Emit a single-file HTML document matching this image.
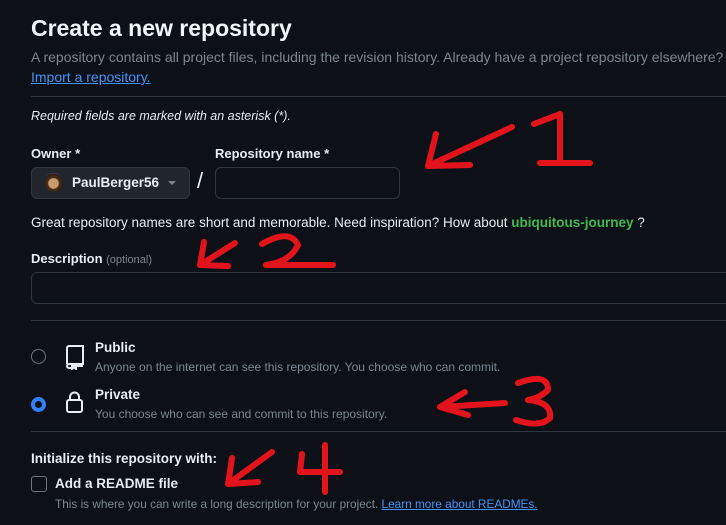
<!DOCTYPE html>
<html><head><style>
body{margin:0;width:726px;height:525px;background:#0d1117;overflow:hidden;font-family:"Liberation Sans",sans-serif;color:#e6edf3;position:relative}
.a{position:absolute;white-space:nowrap}
.g{color:#7d8590}
.hr{position:absolute;left:31px;right:0;height:1px;background:#30363d}
b{font-weight:bold}
</style></head><body>
<div class="a" style="left:31px;top:15px;font-size:23px;font-weight:bold;color:#f0f6fc">Create a new repository</div>
<div class="a g" style="left:31px;top:49px;font-size:14px">A repository contains all project files, including the revision history. Already have a project repository elsewhere?</div>
<div class="a" style="left:31px;top:69px;font-size:14px;color:#4493f8;text-decoration:underline">Import a repository.</div>
<div class="hr" style="top:96px"></div>
<div class="a" style="left:31px;top:109px;font-size:12.5px;font-style:italic">Required fields are marked with an asterisk (*).</div>
<div class="a" style="left:31px;top:146px;font-size:13px;font-weight:bold">Owner *</div>
<div class="a" style="left:215px;top:146px;font-size:13px;font-weight:bold">Repository name *</div>
<div class="a" style="left:31px;top:167px;width:157px;height:30px;border:1px solid #30363d;border-radius:6px;background:#21262d"></div>
<div class="a" style="left:44px;top:173px;width:19px;height:19px;border-radius:50%;background:radial-gradient(circle at 50% 55%,#c89a70 0 35%,#4a2e1c 40%,#2a1d14 70%,#6b3aa8 72%)"></div>
<div class="a" style="left:72px;top:175px;font-size:13.5px;font-weight:bold">PaulBerger56</div>
<div class="a" style="left:168px;top:181px;border:4px solid transparent;border-top:4px solid #7d8590"></div>
<div class="a" style="left:197px;top:168px;font-size:22px">/</div>
<div class="a" style="left:215px;top:167px;width:183px;height:30px;border:1px solid #30363d;border-radius:6px;background:#0d1117"></div>
<div class="a" style="left:31px;top:215px;font-size:13.5px">Great repository names are short and memorable. Need inspiration? How about <b style="color:#3fb950">ubiquitous-journey</b> ?</div>
<div class="a" style="left:31px;top:251px;font-size:13px;font-weight:bold">Description <span class="g" style="font-weight:normal;font-size:11px">(optional)</span></div>
<div class="a" style="left:31px;top:272px;width:720px;height:30px;border:1px solid #30363d;border-radius:6px"></div>
<div class="hr" style="top:320px"></div>
<div class="a" style="left:31px;top:349px;width:13px;height:13px;border:1px solid #6e7681;border-radius:50%"></div>
<svg class="a" style="left:64px;top:344px" width="22" height="26" viewBox="0 0 22 26" fill="none" stroke="#e6edf3" stroke-width="2"><path d="M3 20V4a2 2 0 0 1 2-2h14v18H5a2 2 0 0 0-2 2 2 2 0 0 0 2 2h2M13 22h6"/><path d="M8 20v5l2-1.5 2 1.5v-5" fill="#e6edf3"/></svg>
<div class="a" style="left:95px;top:340px;font-size:13.5px;font-weight:bold">Public</div>
<div class="a g" style="left:95px;top:360px;font-size:12px">Anyone on the internet can see this repository. You choose who can commit.</div>
<div class="a" style="left:31px;top:397px;width:7px;height:7px;border:4px solid #2f81f7;border-radius:50%;background:#0d1117"></div>
<svg class="a" style="left:65px;top:390px" width="20" height="24" viewBox="0 0 20 24" fill="none" stroke="#e6edf3" stroke-width="2"><rect x="2" y="10" width="15" height="12" rx="2"/><path d="M5 10V7a4.5 4.5 0 0 1 9 0v3"/></svg>
<div class="a" style="left:95px;top:387px;font-size:13.5px;font-weight:bold">Private</div>
<div class="a g" style="left:95px;top:407px;font-size:12px">You choose who can see and commit to this repository.</div>
<div class="hr" style="top:431px"></div>
<div class="a" style="left:31px;top:451px;font-size:13.5px;font-weight:bold">Initialize this repository with:</div>
<div class="a" style="left:31px;top:476px;width:14px;height:14px;border:1px solid #6e7681;border-radius:3px"></div>
<div class="a" style="left:55px;top:476px;font-size:13.5px;font-weight:bold">Add a README file</div>
<div class="a g" style="left:55px;top:497px;font-size:11.8px">This is where you can write a long description for your project. <span style="color:#4493f8;text-decoration:underline">Learn more about READMEs.</span></div>
<svg class="a" style="left:0;top:0" width="726" height="525" fill="none" stroke="#e3131b" stroke-width="6" stroke-linecap="round" stroke-linejoin="round">
<path d="M512 127L428 166M428 166L436 134M428 166L470 165"/>
<path d="M534 124L560 114V163M540 163H590"/>
<path d="M235 243L200 265M200 265L204 242M200 265L228 266"/>
<path d="M262 244Q290 228 298 245Q290 262 266 265H333"/>
<path d="M505 403L440 407M440 407L465 392M440 407L468 415"/>
<path d="M518 383Q548 372 548 390Q540 398 528 400Q552 402 550 418Q540 428 516 420"/>
<path d="M272 452L228 484M228 484L232 458M228 484L258 482"/>
<path d="M302 454L300 472H340M325 445V492"/>
</svg>
</body></html>
